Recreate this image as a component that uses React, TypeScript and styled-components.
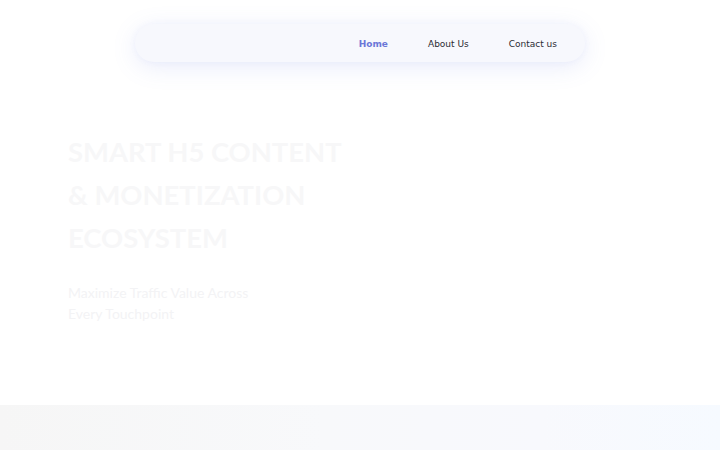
import * as React from "react";
import styled, { createGlobalStyle } from "styled-components";

const GlobalStyle = createGlobalStyle`
  html, body {
    margin: 0;
    padding: 0;
    background: #ffffff;
  }
  body {
    font-family: "DejaVu Sans", sans-serif;
  }
`;

const Page = styled.div`
  width: 720px;
  height: 450px;
  overflow: hidden;
  display: flex;
  flex-direction: column;
  background: #ffffff;
`;

const Header = styled.header`
  display: flex;
  justify-content: center;
  padding-top: 24px;
`;

const NavBar = styled.nav`
  width: 450px;
  height: 38px;
  box-sizing: border-box;
  border-radius: 19px;
  background: #f7f8fd;
  box-shadow: 0 5px 24px rgba(110, 125, 225, 0.15), 0 0 6px rgba(110, 125, 225, 0.06);
  display: flex;
  align-items: center;
  justify-content: flex-end;
  gap: 40px;
  padding: 1px 28px 0 0;
`;

const NavLink = styled.a<{ $active?: boolean }>`
  font-family: "DejaVu Sans", sans-serif;
  font-size: 9px;
  font-weight: ${(p) => (p.$active ? 700 : 400)};
  color: ${(p) => (p.$active ? "#6b77d8" : "#2b2b33")};
  text-decoration: none;
  cursor: pointer;
`;

const Hero = styled.section`
  flex: 1;
  padding: 68px 0 0 68px;
`;

const Title = styled.h1`
  margin: 0;
  font-family: Lato, "Open Sans", sans-serif;
  font-weight: 700;
  font-size: 27.4px;
  line-height: 43px;
  color: #f7f7f8;
`;

const Subtitle = styled.p`
  margin: 23px 0 0;
  font-family: Lato, "Open Sans", sans-serif;
  font-size: 14px;
  line-height: 21px;
  color: #f3f3f5;
`;

const Band = styled.div`
  height: 45px;
  background: linear-gradient(90deg, #f6f6f6 0%, #f8f9fb 45%, #f8f9fd 75%, #f6faff 100%);
`;

const App: React.FC = () => (
  <Page>
    <GlobalStyle />
    <Header>
      <NavBar>
        <NavLink $active>Home</NavLink>
        <NavLink>About Us</NavLink>
        <NavLink>Contact us</NavLink>
      </NavBar>
    </Header>
    <Hero>
      <Title>
        SMART H5 CONTENT
        <br />
        &amp; MONETIZATION
        <br />
        ECOSYSTEM
      </Title>
      <Subtitle>
        Maximize Traffic Value Across
        <br />
        Every Touchpoint
      </Subtitle>
    </Hero>
    <Band />
  </Page>
);

export default App;
